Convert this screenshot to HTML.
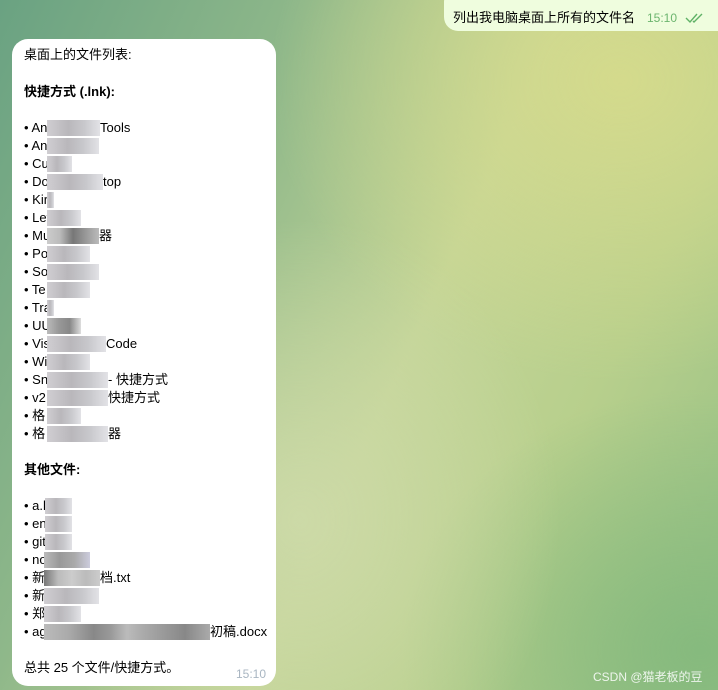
<!DOCTYPE html>
<html><head><meta charset="utf-8"><style>
*{margin:0;padding:0;box-sizing:border-box}
body{width:718px;height:690px;overflow:hidden;position:relative;font-family:"Liberation Sans","Noto Sans CJK SC",sans-serif;font-size:13px;color:#000;
background:
radial-gradient(ellipse 260px 300px at 300px 520px,rgba(205,218,168,.95),rgba(205,218,168,0) 100%),
radial-gradient(ellipse 350px 300px at 620px 80px,rgba(212,218,140,1),rgba(212,218,140,0) 100%),
radial-gradient(ellipse 300px 260px at 700px 650px,rgba(134,186,126,1),rgba(134,186,126,0) 100%),
linear-gradient(115deg,#6aa282 0%,#8fb88a 30%,#c4d597 55%,#b7cf8c 75%,#96c084 100%);}
.b{position:absolute;left:12px;top:39px;width:264px;height:647px;background:#fff;border-radius:16px}
.l{position:absolute;left:24px;white-space:nowrap;line-height:18px}
.x{position:absolute;top:1px;height:16px;background:linear-gradient(90deg,#d0ced2,#b9b7bb 40%,#c8c8cc 70%,#e2e2e6)}
.s{position:absolute;top:0}
.me{position:absolute;left:444px;top:-12px;width:290px;height:43px;background:#effdde;border-radius:14px}
</style></head><body>
<div class="me"></div>
<div style="position:absolute;left:453px;top:7px;font-size:13px">列出我电脑桌面上所有的文件名</div>
<div style="position:absolute;left:647px;top:11px;font-size:12px;color:#6cb56e">15:10</div>
<svg style="position:absolute;left:685px;top:12px" width="20" height="12" viewBox="0 0 20 12"><path d="M1 6l4 4 7-8M8 9l1 1 8-8" fill="none" stroke="#5fb266" stroke-width="1.4"/></svg>
<div class="b"></div>
<div class="l" style="top:46px">桌面上的文件列表:</div>
<div class="l" style="top:83px;font-weight:bold">快捷方式 (.lnk):</div>

<div class="l" style="top:119px">• Ant<span class="x" style="left:23px;width:53px"></span><span class="s" style="left:76px">Tools</span></div>
<div class="l" style="top:137px">• Ant<span class="x" style="left:23px;width:52px"></span></div>
<div class="l" style="top:155px">• Cu<span class="x" style="left:23px;width:25px"></span></div>
<div class="l" style="top:173px">• Do<span class="x" style="left:23px;width:56px"></span><span class="s" style="left:79px">top</span></div>
<div class="l" style="top:191px">• Kir<span class="x" style="left:23px;width:7px"></span></div>
<div class="l" style="top:209px">• Let<span class="x" style="left:23px;width:34px"></span></div>
<div class="l" style="top:227px">• Mu<span class="x" style="left:23px;width:52px;background:linear-gradient(90deg,#ccc,#bbb,#777 50%,#999,#bbb)"></span><span class="s" style="left:75px">器</span></div>
<div class="l" style="top:245px">• Po<span class="x" style="left:23px;width:43px"></span></div>
<div class="l" style="top:263px">• So<span class="x" style="left:23px;width:52px"></span></div>
<div class="l" style="top:281px">• Te<span class="x" style="left:23px;width:43px"></span></div>
<div class="l" style="top:299px">• Tra<span class="x" style="left:23px;width:7px"></span></div>
<div class="l" style="top:317px">• UU<span class="x" style="left:23px;width:34px;background:linear-gradient(90deg,#bbb,#999,#888,#ddd)"></span></div>
<div class="l" style="top:335px">• Vis<span class="x" style="left:23px;width:59px"></span><span class="s" style="left:82px">Code</span></div>
<div class="l" style="top:353px">• Wi<span class="x" style="left:23px;width:43px"></span></div>
<div class="l" style="top:371px">• Sn<span class="x" style="left:23px;width:61px"></span><span class="s" style="left:84px">- 快捷方式</span></div>
<div class="l" style="top:389px">• v2<span class="x" style="left:23px;width:61px"></span><span class="s" style="left:84px">快捷方式</span></div>
<div class="l" style="top:407px">• 格<span class="x" style="left:23px;width:34px"></span></div>
<div class="l" style="top:425px">• 格<span class="x" style="left:23px;width:61px"></span><span class="s" style="left:84px">器</span></div>

<div class="l" style="top:461px;font-weight:bold">其他文件:</div>
<div class="l" style="top:497px">• a.h<span class="x" style="left:21px;width:27px"></span></div>
<div class="l" style="top:515px">• en<span class="x" style="left:21px;width:27px"></span></div>
<div class="l" style="top:533px">• git<span class="x" style="left:21px;width:27px"></span></div>
<div class="l" style="top:551px">• no<span class="x" style="left:20px;width:46px;background:linear-gradient(90deg,#bbb,#999,#aaa,#ccd)"></span></div>
<div class="l" style="top:569px">• 新<span class="x" style="left:20px;width:56px;background:linear-gradient(90deg,#777,#bbb,#ccc,#bbb,#ccc)"></span><span class="s" style="left:76px">档.txt</span></div>
<div class="l" style="top:587px">• 新<span class="x" style="left:20px;width:55px"></span></div>
<div class="l" style="top:605px">• 郑<span class="x" style="left:20px;width:37px"></span></div>
<div class="l" style="top:623px">• ag<span class="x" style="left:20px;width:166px;background:linear-gradient(90deg,#bbb,#aaa,#888 30%,#999,#bbb,#aaa 60%,#999,#888 85%,#aaa)"></span><span class="s" style="left:186px">初稿.docx</span></div>
<div class="l" style="top:659px">总共 25 个文件/快捷方式。</div>
<div style="position:absolute;left:236px;top:667px;font-size:12px;color:#a9b6c2">15:10</div>
<div style="position:absolute;left:593px;top:668px;font-size:12px;color:#fff;opacity:.85">CSDN @猫老板的豆</div>
</body></html>
